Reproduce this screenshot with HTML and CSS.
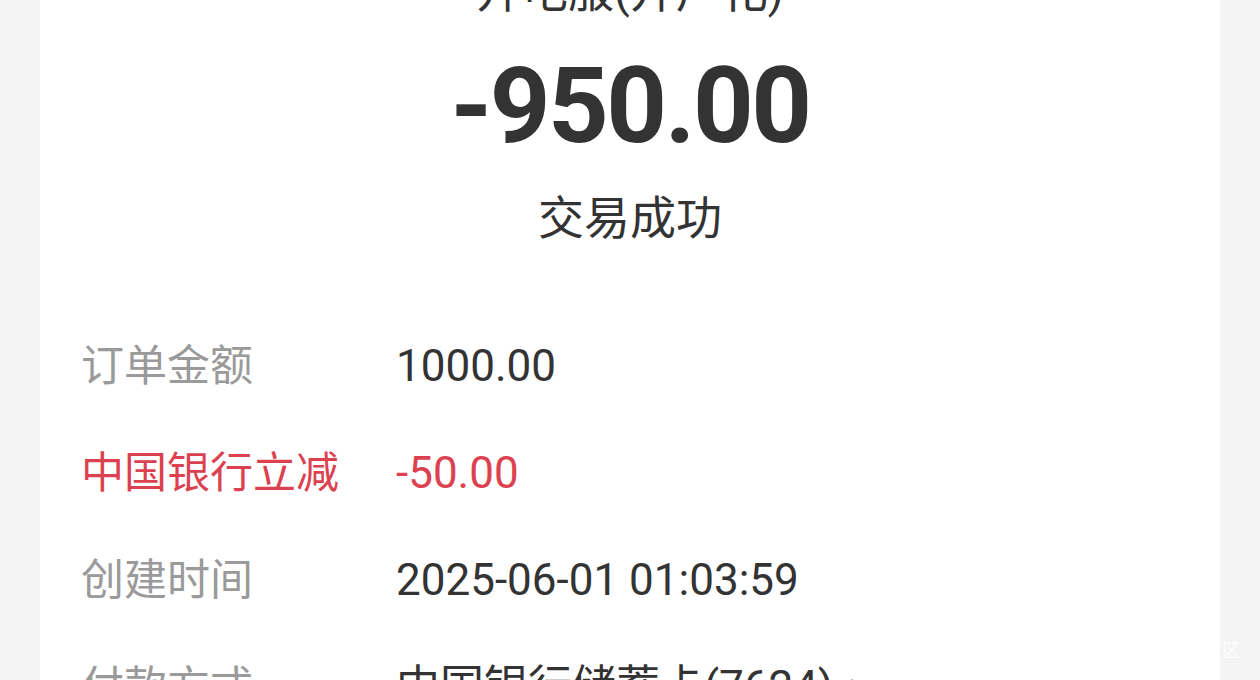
FILE: index.html
```html
<!DOCTYPE html>
<html lang="zh-CN">
<head>
<meta charset="utf-8">
<title>账单详情</title>
<link rel="stylesheet" href="styles.css">
</head>
<body>
<main class="card">
  <section class="head">
    <div class="title">开电服(开户化)</div>
    <div class="amount">-950.00</div>
    <div class="status">交易成功</div>
  </section>
  <section class="rows">
    <div class="label">订单金额</div>
    <div class="value">1000.00</div>
    <div class="label red">中国银行立减</div>
    <div class="value red">-50.00</div>
    <div class="label">创建时间</div>
    <div class="value">2025-06-01 01:03:59</div>
    <div class="label">付款方式</div>
    <div class="value">中国银行储蓄卡(7624)<svg class="chev" viewBox="0 0 14 24" width="14" height="24"><path d="M3 4 L11 12 L3 20" fill="none" stroke="#b8b8b8" stroke-width="2.2" stroke-linecap="round" stroke-linejoin="round"/></svg></div>
  </section>
</main>
<div class="mark">区</div>
</body>
</html>
```
FILE: styles.css
```css
html, body {
  margin: 0;
  padding: 0;
  background: #f4f4f4;
  height: 680px;
  overflow: hidden;
}
body {
  font-family: Roboto, "Noto Sans CJK SC", sans-serif;
  color: #333;
}
.card {
  margin: 0 40px;
  background: #fff;
  height: 760px;
}
.head {
  text-align: center;
}
.title {
  font-size: 46px;
  line-height: 46px;
  margin-top: -32px;
}
.amount {
  margin-top: 39px;
  font-size: 106px;
  line-height: 106px;
  font-weight: 700;
  letter-spacing: -2.5px;
}
.status {
  margin-top: 36px;
  font-size: 46px;
  line-height: 46px;
}
.rows {
  margin-top: 72px;
  padding-left: 41px;
  display: grid;
  grid-template-columns: 315px 1fr;
  grid-auto-rows: 107px;
  align-items: center;
  line-height: 45px;
}
.label {
  font-size: 43px;
  color: #9a9a9a;
}
.value {
  font-size: 44px;
  color: #333;
  display: flex;
  align-items: center;
}
.red {
  color: #dc4150;
}
.chev {
  margin-left: 16px;
}
.mark {
  position: absolute;
  left: 1222px;
  top: 636px;
  font-size: 18px;
  color: rgba(255, 255, 255, 0.9);
}
```
